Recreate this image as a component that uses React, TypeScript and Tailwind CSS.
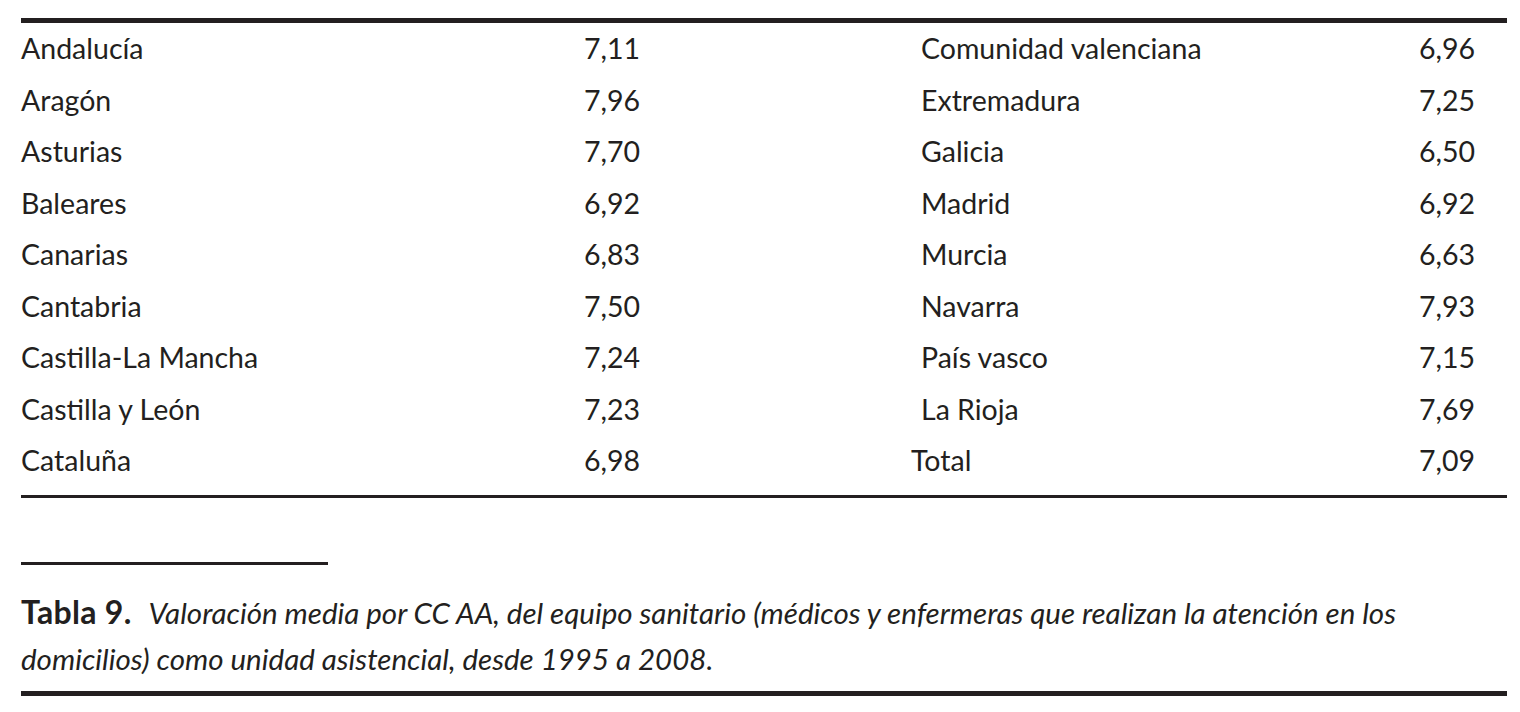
import React from "react";

type Row = { name: string; value: string; shift?: boolean };

const left: Row[] = [
  { name: "Andalucía", value: "7,11" },
  { name: "Aragón", value: "7,96" },
  { name: "Asturias", value: "7,70" },
  { name: "Baleares", value: "6,92" },
  { name: "Canarias", value: "6,83" },
  { name: "Cantabria", value: "7,50" },
  { name: "Castilla-La Mancha", value: "7,24" },
  { name: "Castilla y León", value: "7,23" },
  { name: "Cataluña", value: "6,98" },
];

const right: Row[] = [
  { name: "Comunidad valenciana", value: "6,96" },
  { name: "Extremadura", value: "7,25" },
  { name: "Galicia", value: "6,50" },
  { name: "Madrid", value: "6,92" },
  { name: "Murcia", value: "6,63" },
  { name: "Navarra", value: "7,93" },
  { name: "País vasco", value: "7,15" },
  { name: "La Rioja", value: "7,69" },
  { name: "Total", value: "7,09", shift: true },
];

const Cell = ({ row }: { row: Row }) => (
  <div className="flex h-[51.5px] items-center justify-between">
    <span className={row.shift ? "-ml-[10px]" : ""}>{row.name}</span>
    <span>{row.value}</span>
  </div>
);

export default function App() {
  return (
    <div
      className="w-[1520px] h-[712px] bg-white pt-[18px] pl-[21px] text-[#231f20]"
      style={{ fontFamily: "Lato, 'Open Sans', sans-serif" }}
    >
      <div className="w-[1486px]">
        {/* Table */}
        <div className="h-[5px] bg-[#231f20]" />
        <div className="flex pb-2 text-[28.5px]">
          <div className="w-[619px]">
            {left.map((r) => (
              <Cell key={r.name} row={r} />
            ))}
          </div>
          <div className="ml-[281px] w-[554px]">
            {right.map((r) => (
              <Cell key={r.name} row={r} />
            ))}
          </div>
        </div>
        <div className="h-[3px] bg-[#231f20]" />

        {/* Caption */}
        <div className="mt-[64px] h-[3px] w-[307px] bg-[#231f20]" />
        <p className="mt-[24px] text-[29.5px] leading-[46px] italic">
          <span className="mr-[17px] text-[32px] font-bold not-italic tracking-[0.3px]">
            Tabla 9.
          </span>
          Valoración media por CC AA, del equipo sanitario (médicos y
          enfermeras que realizan la atención en los
          <br />
          domicilios) como unidad asistencial, desde 1995 a 2008.
        </p>
        <div className="mt-[9px] h-[5px] bg-[#231f20]" />
      </div>
    </div>
  );
}
